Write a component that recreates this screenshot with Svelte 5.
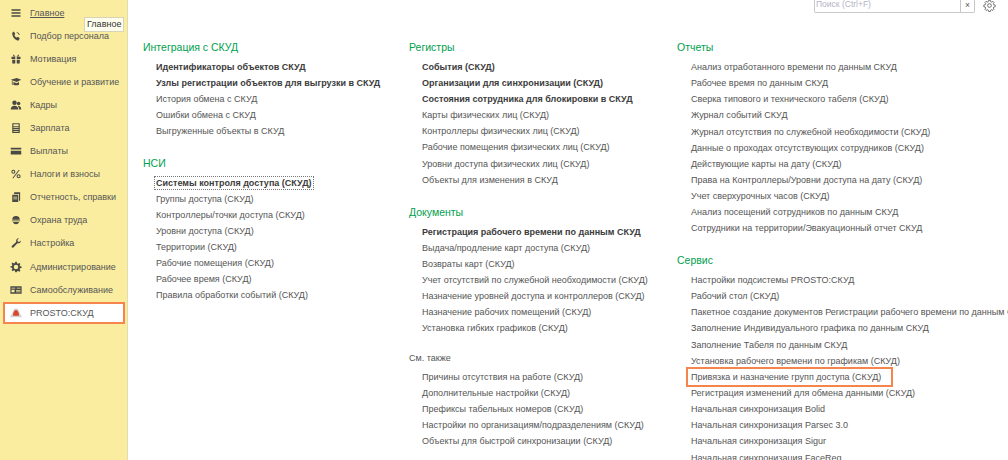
<script>
  const nav = [
    { label: 'Главное', icon: 'menu', current: true },
    { label: 'Подбор персонала', icon: 'phone' },
    { label: 'Мотивация', icon: 'gift' },
    { label: 'Обучение и развитие', icon: 'cap' },
    { label: 'Кадры', icon: 'people' },
    { label: 'Зарплата', icon: 'calc' },
    { label: 'Выплаты', icon: 'card' },
    { label: 'Налоги и взносы', icon: 'percent' },
    { label: 'Отчетность, справки', icon: 'docs' },
    { label: 'Охрана труда', icon: 'helmet' },
    { label: 'Настройка', icon: 'wrench' },
    { label: 'Администрирование', icon: 'gear' },
    { label: 'Самообслуживание', icon: 'self' },
    { label: 'PROSTO:СКУД', icon: 'prosto', selected: true }
  ];

  const columns = [
    [
      {
        title: 'Интеграция с СКУД',
        bold: ['Идентификаторы объектов СКУД', 'Узлы регистрации объектов для выгрузки в СКУД'],
        links: ['История обмена с СКУД', 'Ошибки обмена с СКУД', 'Выгруженные объекты в СКУД']
      },
      {
        title: 'НСИ',
        focus: 'Системы контроля доступа (СКУД)',
        links: [
          'Группы доступа (СКУД)',
          'Контроллеры/точки доступа (СКУД)',
          'Уровни доступа (СКУД)',
          'Территории (СКУД)',
          'Рабочие помещения (СКУД)',
          'Рабочее время (СКУД)',
          'Правила обработки событий (СКУД)'
        ]
      }
    ],
    [
      {
        title: 'Регистры',
        bold: [
          'События (СКУД)',
          'Организации для синхронизации (СКУД)',
          'Состояния сотрудника для блокировки в СКУД'
        ],
        links: [
          'Карты физических лиц (СКУД)',
          'Контроллеры физических лиц (СКУД)',
          'Рабочие помещения физических лиц (СКУД)',
          'Уровни доступа физических лиц (СКУД)',
          'Объекты для изменения в СКУД'
        ]
      },
      {
        title: 'Документы',
        bold: ['Регистрация рабочего времени по данным СКУД'],
        links: [
          'Выдача/продление карт доступа (СКУД)',
          'Возвраты карт (СКУД)',
          'Учет отсутствий по служебной необходимости (СКУД)',
          'Назначение уровней доступа и контроллеров (СКУД)',
          'Назначение рабочих помещений (СКУД)',
          'Установка гибких графиков (СКУД)'
        ]
      },
      {
        title: 'См. также',
        small: true,
        links: [
          'Причины отсутствия на работе (СКУД)',
          'Дополнительные настройки (СКУД)',
          'Префиксы табельных номеров (СКУД)',
          'Настройки по организациям/подразделениям (СКУД)',
          'Объекты для быстрой синхронизации (СКУД)'
        ]
      }
    ],
    [
      {
        title: 'Отчеты',
        links: [
          'Анализ отработанного времени по данным СКУД',
          'Рабочее время по данным СКУД',
          'Сверка типового и технического табеля (СКУД)',
          'Журнал событий СКУД',
          'Журнал отсутствия по служебной необходимости (СКУД)',
          'Данные о проходах отсутствующих сотрудников (СКУД)',
          'Действующие карты на дату (СКУД)',
          'Права на Контроллеры/Уровни доступа на дату (СКУД)',
          'Учет сверхурочных часов (СКУД)',
          'Анализ посещений сотрудников по данным СКУД',
          'Сотрудники на территории/Эвакуационный отчет СКУД'
        ]
      },
      {
        title: 'Сервис',
        links: [
          'Настройки подсистемы PROSTO:СКУД',
          'Рабочий стол (СКУД)',
          'Пакетное создание документов Регистрации рабочего времени по данным СКУД',
          'Заполнение Индивидуального графика по данным СКУД',
          'Заполнение Табеля по данным СКУД',
          'Установка рабочего времени по графикам (СКУД)',
          'Привязка и назначение групп доступа (СКУД)',
          'Регистрация изменений для обмена данными (СКУД)',
          'Начальная синхронизация Bolid',
          'Начальная синхронизация Parsec 3.0',
          'Начальная синхронизация Sigur',
          'Начальная синхронизация FaceReg'
        ],
        marked: 'Привязка и назначение групп доступа (СКУД)'
      }
    ]
  ];
</script>

<div class="page">
  <aside class="sidebar">
    {#each nav as item}
      <div class="nav-item" class:selected={item.selected}>
        <svg class="nav-icon" viewBox="0 0 16 16">
          {#if item.icon === 'menu'}
            <path d="M2 3h12v2H2zM2 7h12v2H2zM2 11h12v2H2z" />
          {:else if item.icon === 'phone'}
            <path d="M5 2 7 5 6 7c.5 1.500 1.500 2.500 3 3l1.500-1 2.500 2-1.500 3C6.500 14 2.500 8 3 3.500z" />
            <path d="M9 2.500a4.500 4.500 0 0 1 4 4h-1.200A3.300 3.300 0 0 0 9 3.700z" />
          {:else if item.icon === 'gift'}
            <path d="M2 5h5v3H2zM9 5h5v3H9zM3 9h4v5H3zM9 9h4v5H9z" />
            <path d="M4 1.500 7.500 4.500H4.500zM12 1.500 8.500 4.500h3z" />
          {:else if item.icon === 'cap'}
            <path d="M1 5 9 2.500 15 5 9 8z" />
            <path d="M2.500 6h1v6h-1z" />
            <path d="M4.500 8 9 9.500l3-1.500v3.500c-2 1-5.500 1-7.500 0z" />
          {:else if item.icon === 'people'}
            <circle cx="6" cy="5" r="3" />
            <circle cx="11.500" cy="6" r="2.300" />
            <path d="M1 14c0-3.500 2-5 5-5s5 1.500 5 5zM12 14c0-2-.5-3.500-1.500-4.500 2.500-.5 4.500 1 4.500 4.500z" />
          {:else if item.icon === 'calc'}
            <path
              fill-rule="evenodd"
              d="M3 1.500h10v13H3zM4.500 3v2.500h7V3zM4.500 7v1h7V7zM4.500 9.500v1h7v-1zM4.500 12v1h7v-1z"
            />
          {:else if item.icon === 'card'}
            <path d="M1 3.500h14v2.500H1zM1 7.500h14v5H1z" />
          {:else if item.icon === 'percent'}
            <path d="M11.500 2.500h1.500L4.500 13.500H3z" />
            <circle cx="4.500" cy="5" r="2" fill="none" stroke-width="1.400" class="line" />
            <circle cx="11.500" cy="11" r="2" fill="none" stroke-width="1.400" class="line" />
          {:else if item.icon === 'docs'}
            <path
              fill-rule="evenodd"
              d="M3 5h8v9.500H3zM4.500 7.500v1h5v-1zM4.500 10v1h5v-1zM12 3v10h1.500V1.500h-8V4H12z"
            />
          {:else if item.icon === 'helmet'}
            <path d="M3 7.500a5 5 0 0 1 10 0zM2.500 8.500h11v1.200h-11zM4 10.700h8c-.5 2-2 3-4 3s-3.500-1-4-3z" />
          {:else if item.icon === 'wrench'}
            <path
              d="M14.500 4.500c.3 2.500-2 4.500-4.500 3.700L4.500 14c-1 1-3.200-.8-2.200-2l6-5.500C7.500 4 9.500 1.500 12 1.800L9.800 4l.5 2 2 .5z"
            />
          {:else if item.icon === 'gear'}
            <path
              fill-rule="evenodd"
              d="M7 1h2l.4 2 1.300.6 1.800-1.100 1.400 1.400-1.100 1.800.6 1.300 2 .4v2l-2 .4-.6 1.300 1.100 1.800-1.400 1.400-1.800-1.100-1.300.6L9 15H7l-.4-2-1.300-.6-1.800 1.100-1.400-1.400 1.100-1.800-.6-1.300-2-.4V7l2-.4.6-1.300-1.100-1.800 1.400-1.400 1.800 1.100 1.300-.6zM8 5a3 3 0 1 0 0 6 3 3 0 0 0 0-6z"
            />
          {:else if item.icon === 'self'}
            <path
              fill-rule="evenodd"
              d="M.5 3h15v10H.5zM2 5v1h5V5zM9 5v1h5V5zM2 7.500V11h4V7.500zM8 8v1h6V8zM8 10v1h6v-1z"
            />
          {:else}
            <path class="base" d="M0 13.500 6 2h4l6 11.500z" />
            <path class="cone" d="M8 4c2.500.5 4 3.500 4 7.500H4C4 7.500 5.500 4.500 8 4z" />
          {/if}
        </svg>
        <span class="nav-label" class:current={item.current}>{item.label}</span>
      </div>
    {/each}
  </aside>

  <main class="content">
    <div class="topbar">
      <div class="search">
        <span class="search-text">Поиск (Ctrl+F)</span>
        <span class="search-clear">×</span>
      </div>
      <svg class="settings" viewBox="0 0 16 16">
        <path
          fill="none"
          stroke="#555"
          d="M7 1.500h2l.4 1.700 1.300.6 1.500-.9 1.400 1.400-.9 1.500.6 1.300 1.700.4v2l-1.700.4-.6 1.300.9 1.500-1.400 1.400-1.500-.9-1.300.6-.4 1.700H7l-.4-1.700-1.300-.6-1.500.9-1.400-1.400.9-1.500-.6-1.300-1.700-.4v-2l1.700-.4.6-1.300-.9-1.500 1.400-1.400 1.500.9 1.300-.6z"
        />
        <circle cx="8" cy="8" r="2.300" fill="none" stroke="#555" />
      </svg>
    </div>

    <div class="columns">
      {#each columns as column}
        <div class="column">
          {#each column as group}
            <section class="group" class:see-also={group.small}>
              <h2>{group.title}</h2>
              {#if group.focus}
                <div class="link bold"><span class="focus">{group.focus}</span></div>
              {/if}
              {#each group.bold ?? [] as text}
                <div class="link bold">{text}</div>
              {/each}
              {#each group.links as text}
                <div class="link">
                  {#if text === group.marked}
                    <span class="marked">{text}</span>
                  {:else}
                    {text}
                  {/if}
                </div>
              {/each}
            </section>
          {/each}
        </div>
      {/each}
    </div>
  </main>

  <div class="tooltip">Главное</div>
</div>

<style>
  :global(body) {
    margin: 0;
    background: #fff;
  }

  .page {
    position: relative;
    display: flex;
    width: 1008px;
    height: 460px;
    overflow: hidden;
    font-family: 'Liberation Sans', Arial, sans-serif;
    font-size: 9px;
    color: #555;
  }

  .sidebar {
    flex: none;
    width: 127px;
    padding-top: 1px;
    background: #fbeda0;
    border-right: 1px solid #e3dcb0;
  }

  .nav-item {
    display: flex;
    align-items: center;
    gap: 8px;
    height: 23.100px;
    padding-left: 10px;
    box-sizing: border-box;
    white-space: nowrap;
  }

  .nav-item.selected {
    height: 22px;
    width: 122px;
    margin: 1px 0 0 3px;
    padding-left: 5px;
    background: #fff;
    border: 2px solid #f5854d;
  }

  .nav-icon {
    flex: none;
    width: 12px;
    height: 12px;
    fill: #4a4a45;
  }

  .nav-icon .line {
    stroke: #4a4a45;
  }

  .nav-icon .cone {
    fill: #d9472b;
  }

  .nav-icon .base {
    fill: #d4d4d4;
  }

  .nav-label.current {
    text-decoration: underline;
  }

  .content {
    flex: 1;
    min-width: 0;
  }

  .topbar {
    display: flex;
    justify-content: flex-end;
    align-items: flex-start;
    gap: 8px;
    height: 40px;
    padding-right: 12px;
  }

  .search {
    display: flex;
    width: 161px;
    height: 13px;
    box-sizing: border-box;
    border: 1px solid #c8c8c8;
    border-top: 0;
    border-radius: 0 0 2px 2px;
    font-size: 8.500px;
    line-height: 9px;
  }

  .search-text {
    flex: 1;
    padding-left: 1px;
    color: #b4b4c8;
  }

  .search-clear {
    width: 13px;
    border-left: 1px solid #c8c8c8;
    text-align: center;
    color: #555;
    line-height: 11px;
  }

  .settings {
    width: 13px;
    height: 13px;
    margin-top: -1px;
  }

  .columns {
    display: flex;
    padding-left: 15px;
  }

  .column {
    flex: none;
    width: 266px;
  }

  .column:nth-child(2) {
    width: 268px;
  }

  .column:last-child {
    width: 331px;
  }

  .group {
    margin-bottom: 17px;
  }

  .column:last-child .group {
    margin-bottom: 16.500px;
  }

  .group.see-also {
    margin-top: -2px;
  }

  h2 {
    margin: 0 0 5px;
    font-size: 10.500px;
    line-height: 14px;
    font-weight: 400;
    color: #00a04e;
  }

  .see-also h2 {
    margin-bottom: 4px;
    font-size: 9px;
    color: #555;
  }

  .link {
    height: 16.100px;
    padding-left: 13px;
    line-height: 16px;
    white-space: nowrap;
  }

  .column:first-child .link,
  .see-also .link {
    height: 16px;
  }

  .column:last-child .link {
    height: 16.150px;
    padding-left: 14px;
  }

  .bold {
    font-weight: 700;
    color: #3c3c3c;
  }

  .focus {
    outline: 1px dotted #777;
    outline-offset: 1px;
  }

  .marked {
    display: inline-block;
    height: 16px;
    padding: 0 10px 0 3px;
    margin-left: -3px;
    outline: 2px solid #f5854d;
    outline-offset: 0;
  }

  .tooltip {
    position: absolute;
    left: 84px;
    top: 17px;
    padding: 1px 2px;
    background: #fffff0;
    border: 1px solid #d8d4b8;
    color: #333;
    font-size: 9px;
    line-height: 11px;
  }
</style>
